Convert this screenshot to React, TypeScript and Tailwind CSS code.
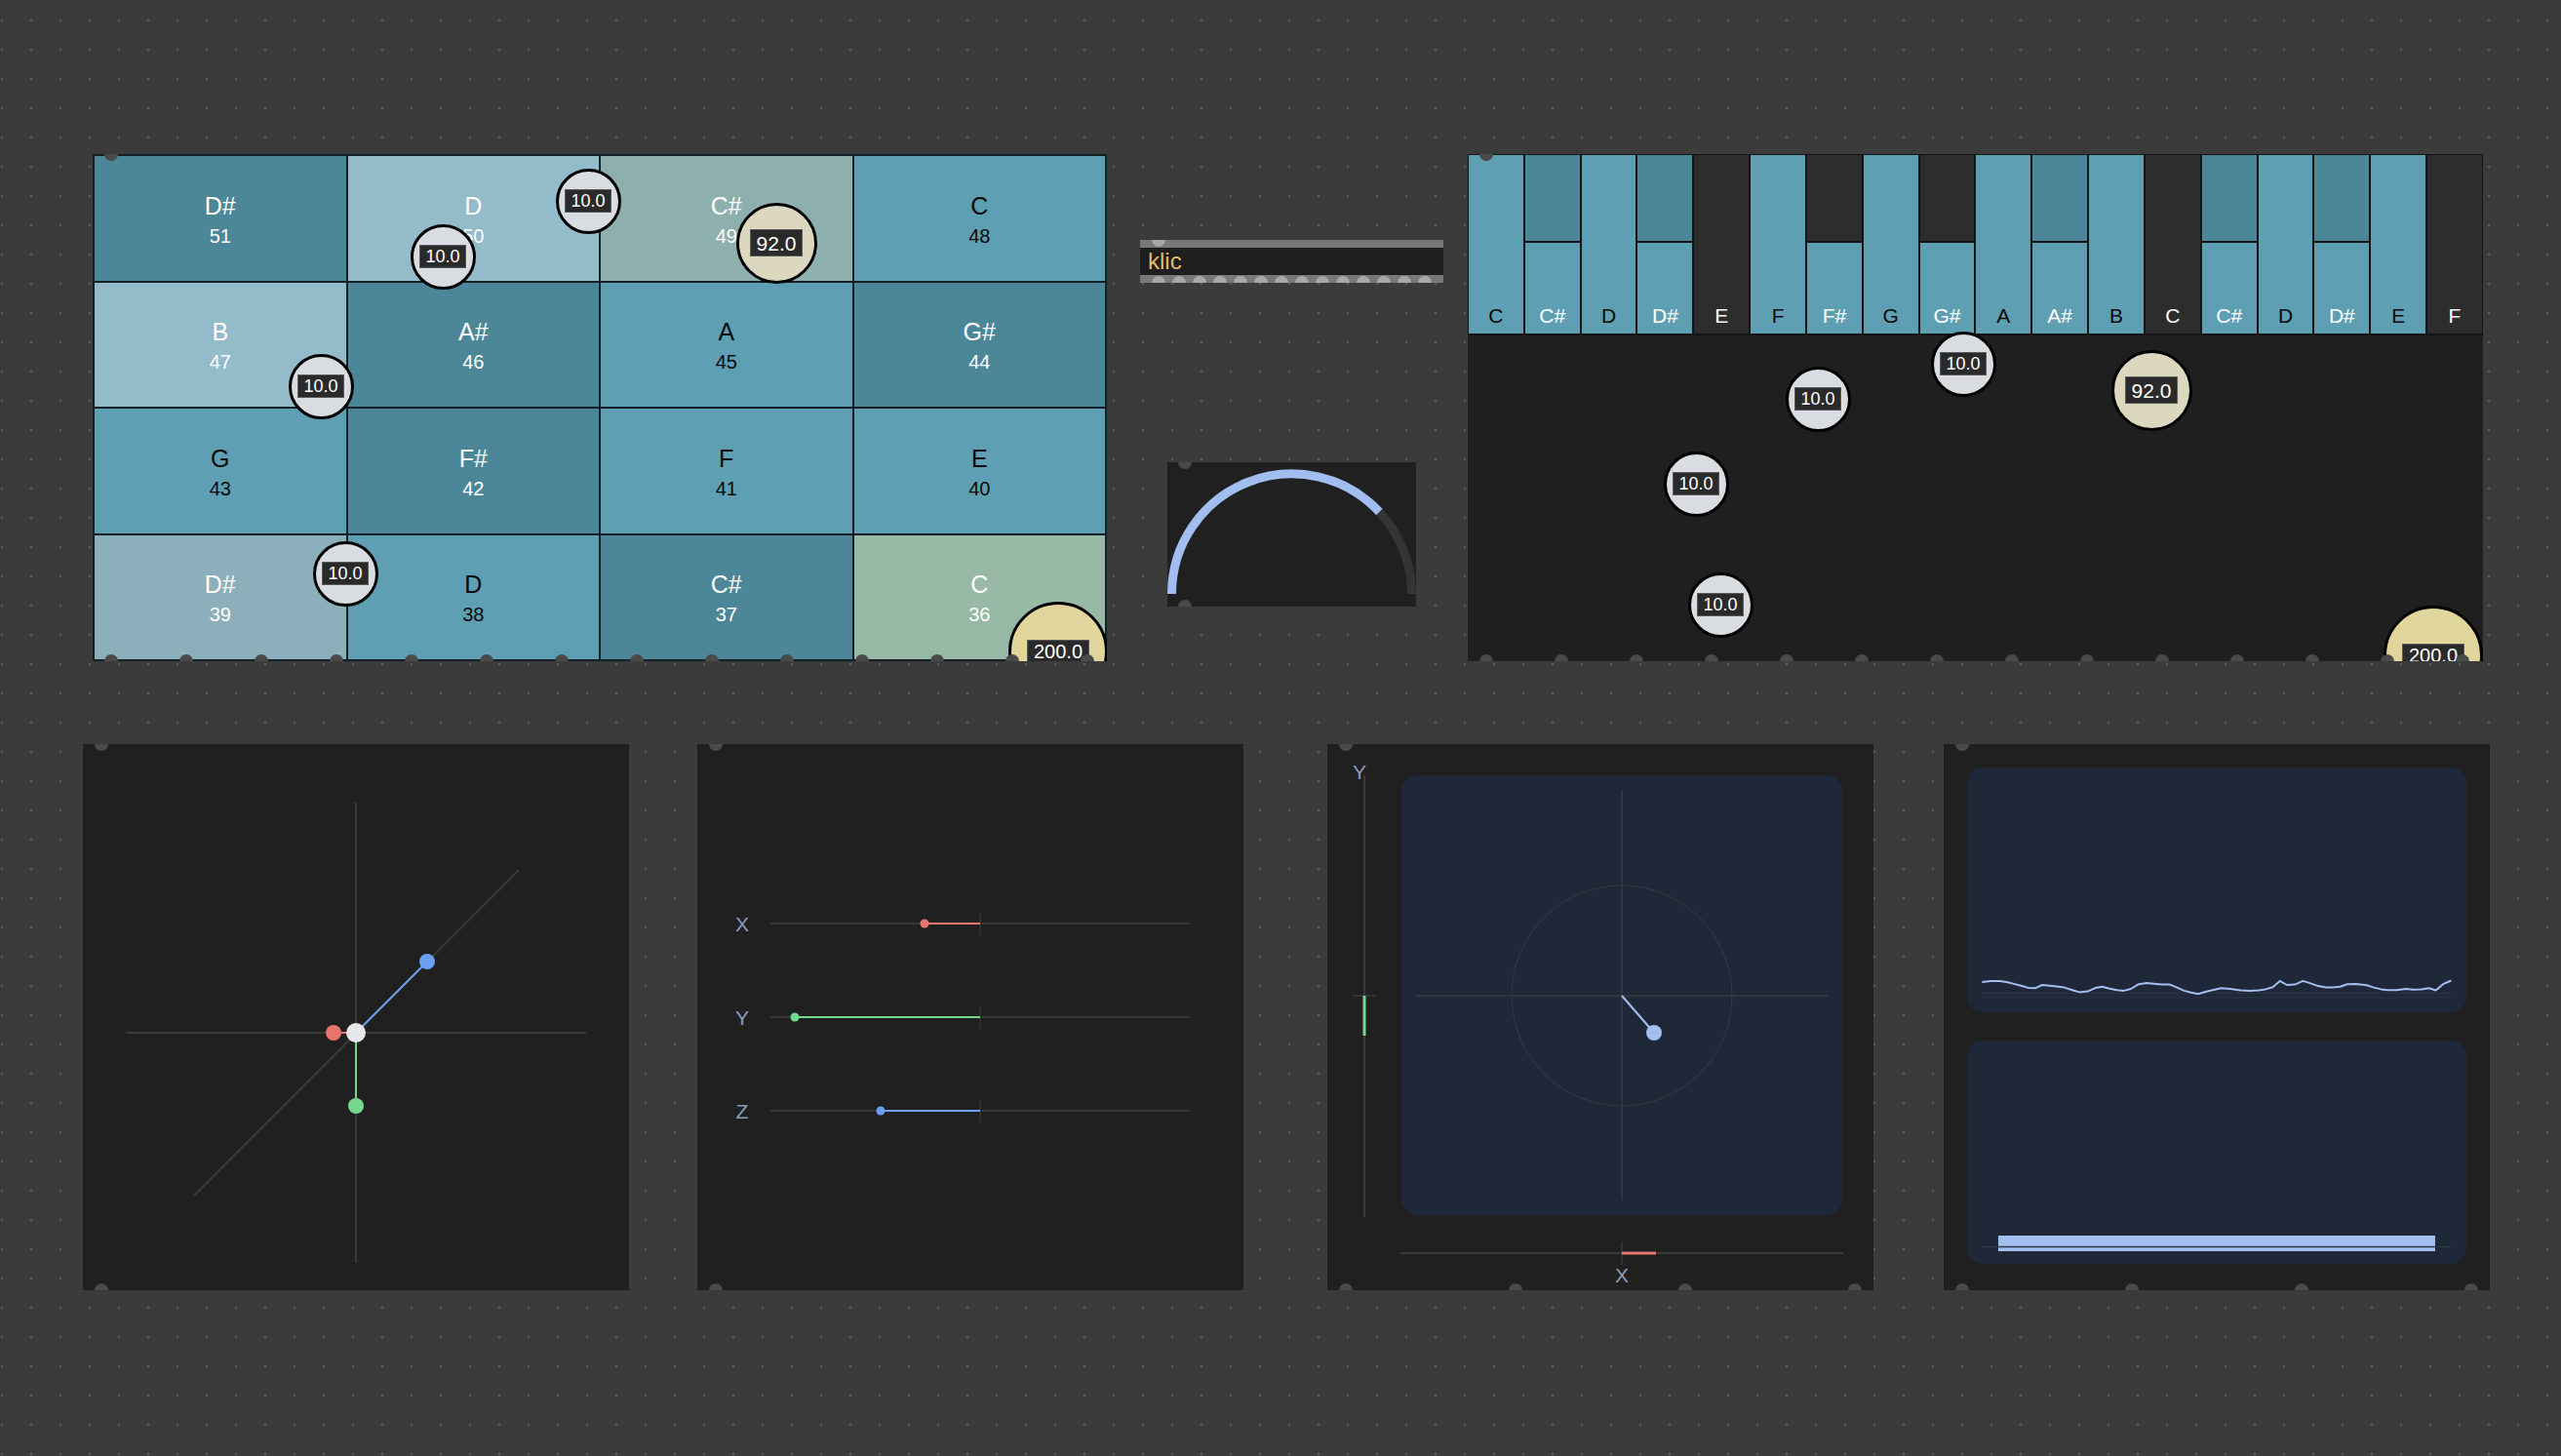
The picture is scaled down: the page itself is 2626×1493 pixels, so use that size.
import React from 'react';

type BubbleKind = 's' | 'm' | 'b';

const bubbleStyle: Record<BubbleKind, { d: number; cls: string; lab: string }> = {
  s: { d: 67, cls: 'w-[67px] h-[67px] bg-[#d9dce1]', lab: 'text-[18px] h-[24px] px-[5px]' },
  m: { d: 83, cls: 'w-[83px] h-[83px] bg-[#dcd8c0]', lab: 'text-[21px] h-[28px] px-[6px]' },
  b: { d: 102, cls: 'w-[102px] h-[102px] bg-[#e0d59a]', lab: 'text-[20px] h-[24px] px-[6px]' },
};

function Bubble({ x, y, k, label }: { x: number; y: number; k: BubbleKind; label: string }) {
  const s = bubbleStyle[k];
  return (
    <div
      className={`absolute rounded-full border-[3px] border-black flex items-center justify-center ${s.cls}`}
      style={{ left: x - s.d / 2, top: y - s.d / 2 }}
    >
      <span className={`flex items-center bg-[#2a2a2a] border border-[#5a5a5a] text-white leading-none ${s.lab}`}>
        {label}
      </span>
    </div>
  );
}

function Port({ x, y, light }: { x: number; y: number; light?: boolean }) {
  return (
    <span
      className={`absolute w-[14px] h-[14px] rounded-full z-10 ${light ? 'bg-[#a8a8a8]' : 'bg-[#4a4a4a]'}`}
      style={{ left: x - 7, top: y - 7 }}
    />
  );
}

type Cell = { n: string; v: number; bg: string; black: boolean };

const cells: Cell[] = [
  { n: 'D#', v: 51, bg: 'bg-[#4c8699]', black: false },
  { n: 'D', v: 50, bg: 'bg-[#94bbca]', black: false },
  { n: 'C#', v: 49, bg: 'bg-[#8db0ae]', black: false },
  { n: 'C', v: 48, bg: 'bg-[#5f9fb4]', black: true },
  { n: 'B', v: 47, bg: 'bg-[#94bbca]', black: false },
  { n: 'A#', v: 46, bg: 'bg-[#4c8699]', black: false },
  { n: 'A', v: 45, bg: 'bg-[#5f9fb4]', black: true },
  { n: 'G#', v: 44, bg: 'bg-[#4c8699]', black: false },
  { n: 'G', v: 43, bg: 'bg-[#5f9fb4]', black: true },
  { n: 'F#', v: 42, bg: 'bg-[#4c8699]', black: false },
  { n: 'F', v: 41, bg: 'bg-[#5f9fb4]', black: true },
  { n: 'E', v: 40, bg: 'bg-[#5f9fb4]', black: true },
  { n: 'D#', v: 39, bg: 'bg-[#8cb0bb]', black: false },
  { n: 'D', v: 38, bg: 'bg-[#5f9fb4]', black: true },
  { n: 'C#', v: 37, bg: 'bg-[#4c8699]', black: false },
  { n: 'C', v: 36, bg: 'bg-[#97b9a6]', black: false },
];

const gridBubbles: [number, number, BubbleKind, string][] = [
  [508, 48, 's', '10.0'],
  [359, 105, 's', '10.0'],
  [234, 238, 's', '10.0'],
  [701, 91, 'm', '92.0'],
  [259, 430, 's', '10.0'],
  [990, 510, 'b', '200.0'],
];

const pianoBubbles: [number, number, BubbleKind, string][] = [
  [508, 215, 's', '10.0'],
  [359, 251, 's', '10.0'],
  [701, 242, 'm', '92.0'],
  [234, 338, 's', '10.0'],
  [259, 462, 's', '10.0'],
  [990, 514, 'b', '200.0'],
];

type KeyT = 'med' | 'splitTeal' | 'splitDark' | 'dark';
const keys: { n: string; t: KeyT }[] = [
  { n: 'C', t: 'med' },
  { n: 'C#', t: 'splitTeal' },
  { n: 'D', t: 'med' },
  { n: 'D#', t: 'splitTeal' },
  { n: 'E', t: 'dark' },
  { n: 'F', t: 'med' },
  { n: 'F#', t: 'splitDark' },
  { n: 'G', t: 'med' },
  { n: 'G#', t: 'splitDark' },
  { n: 'A', t: 'med' },
  { n: 'A#', t: 'splitTeal' },
  { n: 'B', t: 'med' },
  { n: 'C', t: 'dark' },
  { n: 'C#', t: 'splitTeal' },
  { n: 'D', t: 'med' },
  { n: 'D#', t: 'splitTeal' },
  { n: 'E', t: 'med' },
  { n: 'F', t: 'dark' },
];

const bottomPorts14 = Array.from({ length: 14 }, (_, i) => 19 + 77 * i);

function GridPanel() {
  return (
    <div className="relative ml-[10px] w-[1040px] h-[520px] overflow-hidden shrink-0">
      <div className="grid grid-cols-4 grid-rows-4 gap-[2px] w-full h-full bg-[#132026] border-2 border-[#132026]">
        {cells.map((c, i) => (
          <div
            key={i}
            className={`flex flex-col items-center justify-center gap-[8px] pt-[3px] ${c.bg} ${
              c.black ? 'text-[#0a0a0a]' : 'text-white'
            }`}
          >
            <span className="text-[25px] leading-none">{c.n}</span>
            <span className="text-[20px] leading-none">{c.v}</span>
          </div>
        ))}
      </div>
      {gridBubbles.map(([x, y, k, l], i) => (
        <Bubble key={i} x={x} y={y} k={k} label={l} />
      ))}
      <Port x={19} y={0} />
      {bottomPorts14.map((x) => (
        <Port key={x} x={x} y={520} />
      ))}
    </div>
  );
}

function KlicWidget() {
  const ports = Array.from({ length: 14 }, (_, i) => 19 + 21 * i);
  return (
    <div className="relative mt-[88px] w-[311px] h-[44px] flex flex-col overflow-hidden">
      <div className="h-[8px] bg-[#787878]" />
      <div className="h-[28px] bg-[#1e1e1e] flex items-center pl-[8px] text-[24px] leading-none text-[#e6b96c]">
        klic
      </div>
      <div className="h-[8px] bg-[#787878]" />
      <Port x={19} y={0} light />
      {ports.map((x) => (
        <Port key={x} x={x} y={44} light />
      ))}
    </div>
  );
}

function ArcWidget() {
  return (
    <div className="relative mt-[184px] ml-[28px] w-[255px] h-[148px] bg-[#202020] overflow-hidden">
      <svg width="255" height="148" viewBox="0 0 255 148" className="block">
        <path d="M 4.5 135 A 123 123 0 0 1 217.5 51.1" stroke="#a2bdef" strokeWidth="9" fill="none" />
        <path d="M 217.5 51.1 A 123 123 0 0 1 250.5 135" stroke="#343434" strokeWidth="9" fill="none" />
      </svg>
      <Port x={18} y={0} />
      <Port x={18} y={148} />
    </div>
  );
}

function PianoPanel() {
  return (
    <div className="relative ml-[25px] w-[1041px] h-[520px] overflow-hidden bg-[#1f1f1f] shrink-0">
      <div className="flex h-[186px] gap-[2px] bg-[#141414] px-[1px] pt-[1px] pb-[2px]">
        {keys.map((k, i) => {
          const black = k.t === 'med';
          return (
            <div key={i} className="relative flex-1 flex flex-col gap-[2px]">
              {k.t === 'med' && <div className="flex-1 bg-[#5f9fb4]" />}
              {k.t === 'dark' && <div className="flex-1 bg-[#2d2d2d]" />}
              {k.t === 'splitTeal' && (
                <>
                  <div className="h-[88px] bg-[#4c8699]" />
                  <div className="flex-1 bg-[#5f9fb4]" />
                </>
              )}
              {k.t === 'splitDark' && (
                <>
                  <div className="h-[88px] bg-[#2d2d2d]" />
                  <div className="flex-1 bg-[#5f9fb4]" />
                </>
              )}
              <span
                className={`absolute bottom-[8px] inset-x-0 text-center text-[21px] leading-none ${
                  black ? 'text-[#0a0a0a]' : 'text-white'
                }`}
              >
                {k.n}
              </span>
            </div>
          );
        })}
      </div>
      {pianoBubbles.map(([x, y, k, l], i) => (
        <Bubble key={i} x={x} y={y} k={k} label={l} />
      ))}
      <Port x={19} y={0} />
      {bottomPorts14.map((x) => (
        <Port key={x} x={x} y={520} />
      ))}
    </div>
  );
}

const SVGFONT = 'Liberation Sans, Arial, sans-serif';

function AxesPanel() {
  return (
    <div className="relative w-[560px] h-[560px] bg-[#202020] overflow-hidden shrink-0">
      <svg width="560" height="560" viewBox="0 0 560 560" className="block">
        <line x1="280" y1="60" x2="280" y2="532" stroke="#3a3a3a" strokeWidth="2" />
        <line x1="44" y1="296" x2="516" y2="296" stroke="#3a3a3a" strokeWidth="2" />
        <line x1="114" y1="463" x2="447" y2="129" stroke="#3a3a3a" strokeWidth="2" />
        <line x1="257" y1="296" x2="280" y2="296" stroke="#e8756f" strokeWidth="2" />
        <line x1="280" y1="296" x2="353" y2="223" stroke="#6ba0f4" strokeWidth="2" />
        <line x1="280" y1="296" x2="280" y2="371" stroke="#74d88c" strokeWidth="2" />
        <circle cx="257" cy="296" r="8" fill="#e8756f" />
        <circle cx="353" cy="223" r="8" fill="#6ba0f4" />
        <circle cx="280" cy="371" r="8" fill="#74d88c" />
        <circle cx="280" cy="296" r="10" fill="#e5e7eb" />
      </svg>
      <Port x={19} y={0} />
      <Port x={19} y={560} />
    </div>
  );
}

function SlidersPanel() {
  const rows = [
    { l: 'X', y: 184, s: 233, c: '#e8756f' },
    { l: 'Y', y: 280, s: 100, c: '#74d88c' },
    { l: 'Z', y: 376, s: 188, c: '#6ba0f4' },
  ];
  return (
    <div className="relative ml-[70px] w-[560px] h-[560px] bg-[#202020] overflow-hidden shrink-0">
      <svg width="560" height="560" viewBox="0 0 560 560" className="block">
        {rows.map((r) => (
          <g key={r.l}>
            <text x="46" y={r.y + 7.5} textAnchor="middle" fontSize="21" fill="#8d99bb" fontFamily={SVGFONT}>
              {r.l}
            </text>
            <line x1="75" y1={r.y} x2="505" y2={r.y} stroke="#363636" strokeWidth="2" />
            <line x1="290" y1={r.y - 12} x2="290" y2={r.y + 12} stroke="#333333" strokeWidth="1.5" />
            <line x1={r.s} y1={r.y} x2="290" y2={r.y} stroke={r.c} strokeWidth="2" />
            <circle cx={r.s} cy={r.y} r="4.5" fill={r.c} />
          </g>
        ))}
      </svg>
      <Port x={19} y={0} />
      <Port x={19} y={560} />
    </div>
  );
}

function PadPanel() {
  return (
    <div className="relative ml-[86px] w-[560px] h-[560px] bg-[#202020] overflow-hidden shrink-0">
      <svg width="560" height="560" viewBox="0 0 560 560" className="block">
        <rect x="76" y="32" width="452" height="451" rx="16" fill="#1f2839" />
        <line x1="91" y1="258" x2="513" y2="258" stroke="#3a3a3a" strokeWidth="1.5" />
        <line x1="302" y1="47" x2="302" y2="468" stroke="#3a3a3a" strokeWidth="1.5" />
        <circle cx="302" cy="258" r="113" fill="none" stroke="#38383a" strokeWidth="1" />
        <line x1="302" y1="258" x2="335" y2="296" stroke="#a3bff0" strokeWidth="2" />
        <circle cx="335" cy="296" r="8" fill="#a3bff0" />

        <line x1="38" y1="32" x2="38" y2="485" stroke="#3a3a3a" strokeWidth="2" />
        <line x1="26" y1="258" x2="50" y2="258" stroke="#3a3a3a" strokeWidth="1.5" />
        <line x1="38" y1="258" x2="38" y2="299" stroke="#74d88c" strokeWidth="3" />
        <text x="33" y="36" textAnchor="middle" fontSize="21" fill="#8d99bb" fontFamily={SVGFONT}>
          Y
        </text>

        <line x1="75" y1="522" x2="529" y2="522" stroke="#3a3a3a" strokeWidth="2" />
        <line x1="302" y1="510" x2="302" y2="534" stroke="#3a3a3a" strokeWidth="1.5" />
        <line x1="302" y1="522" x2="337" y2="522" stroke="#e8756f" strokeWidth="3" />
        <text x="302" y="552" textAnchor="middle" fontSize="21" fill="#8d99bb" fontFamily={SVGFONT}>
          X
        </text>
      </svg>
      <Port x={19} y={0} />
      {[19, 193, 367, 541].map((x) => (
        <Port key={x} x={x} y={560} />
      ))}
    </div>
  );
}

const wavePts: [number, number][] = [
  [130, 684], [155, 681], [180, 681], [200, 684], [220, 689], [240, 694], [260, 700], [280, 701],
  [300, 692], [320, 694], [340, 696], [362, 699], [385, 706], [405, 712], [428, 710], [448, 701],
  [468, 697], [490, 702], [510, 706], [530, 708], [550, 703], [572, 690], [595, 687], [620, 689],
  [640, 691], [660, 691], [680, 699], [700, 708], [720, 713], [740, 717], [760, 711], [780, 706],
  [805, 701], [830, 703], [860, 707], [885, 708], [910, 707], [930, 704], [950, 698], [970, 681],
  [990, 692], [1012, 691], [1035, 681], [1055, 687], [1078, 695], [1100, 699], [1120, 699],
  [1140, 697], [1160, 690], [1185, 689], [1215, 693], [1235, 699], [1255, 704], [1275, 706],
  [1300, 706], [1325, 703], [1345, 705], [1370, 704], [1390, 701], [1410, 707], [1430, 690],
  [1453, 680],
];

function ChartsPanel() {
  const wave = wavePts
    .map(([x, y]) => `${(x / 2.75 - 8).toFixed(1)},${(y / 2.7034 - 9).toFixed(1)}`)
    .join(' ');
  return (
    <div className="relative ml-[72px] w-[560px] h-[560px] bg-[#202020] overflow-hidden shrink-0">
      <svg width="560" height="560" viewBox="0 0 560 560" className="block">
        <rect x="24" y="24" width="512" height="251" rx="16" fill="#1f2839" />
        <line x1="39" y1="255.5" x2="520" y2="255.5" stroke="#2a3242" strokeWidth="1" />
        <line x1="39" y1="260" x2="520" y2="260" stroke="#2a3242" strokeWidth="1" />
        <polyline points={wave} fill="none" stroke="#a3bff0" strokeWidth="2" strokeLinejoin="round" />

        <rect x="24" y="304" width="512" height="229" rx="16" fill="#1f2839" />
        <rect x="56" y="504" width="448" height="16" fill="#a3bff0" />
        <line x1="39" y1="515.5" x2="520" y2="515.5" stroke="#2f3645" strokeWidth="1.5" />
      </svg>
      <Port x={19} y={0} />
      {[19, 193, 367, 541].map((x) => (
        <Port key={x} x={x} y={560} />
      ))}
    </div>
  );
}

export default function App() {
  return (
    <div className="w-[2626px] h-[1493px] overflow-hidden bg-[#3b3b3b] bg-[radial-gradient(circle,#5c5c5c_1px,transparent_1.6px)] bg-[length:30px_30px] bg-[position:-13px_6px] pt-[158px] pl-[85px] font-['Liberation_Sans',Arial,sans-serif]">
      <div className="flex items-start">
        <GridPanel />
        <div className="ml-[34px] w-[311px] flex flex-col shrink-0">
          <KlicWidget />
          <ArcWidget />
        </div>
        <PianoPanel />
      </div>
      <div className="flex items-start mt-[85px]">
        <AxesPanel />
        <SlidersPanel />
        <PadPanel />
        <ChartsPanel />
      </div>
    </div>
  );
}
